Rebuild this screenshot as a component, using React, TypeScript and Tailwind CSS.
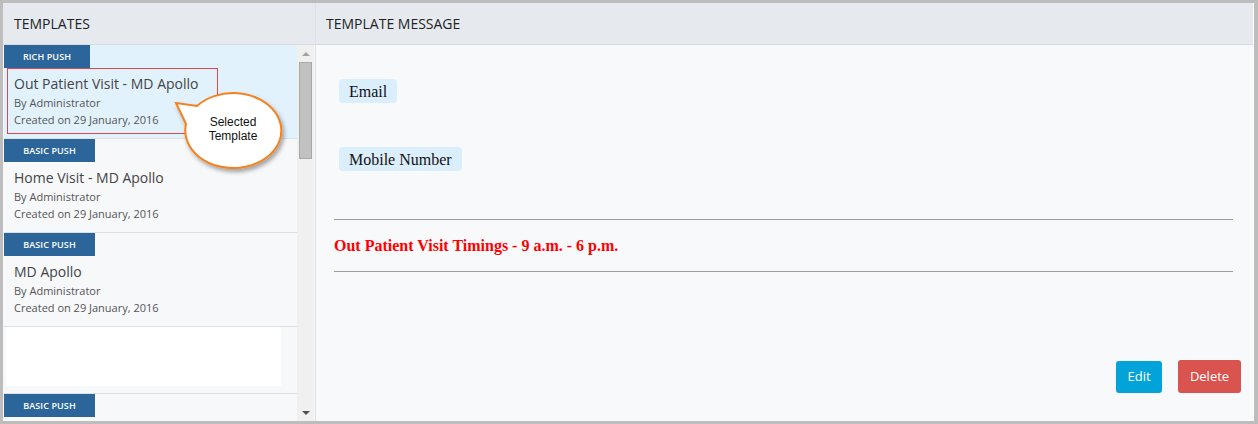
import React from "react";

const sans = { fontFamily: '"Open Sans", "Noto Sans", sans-serif' };

function Badge({ label, wide }: { label: string; wide?: boolean }) {
  return (
    <div
      className={`h-[23px] ${wide ? "w-[91px]" : "w-[86px]"} bg-[#2b6599] text-white text-[9px] font-semibold flex items-center justify-center tracking-[0.1px]`}
    >
      {label}
    </div>
  );
}

function Item({
  badge,
  title,
  selected,
  wide,
}: {
  badge: string;
  title: string;
  selected?: boolean;
  wide?: boolean;
}) {
  return (
    <div
      className={`h-[94px] border-b border-[#dcdfe3] ${selected ? "bg-[#e2f2fd]" : "bg-[#f7f8fa]"}`}
    >
      <Badge label={badge} wide={wide} />
      <div
        className={`ml-[3px] w-[211px] border pl-[6px] pt-[5px] pb-[5px] ${selected ? "border-[#e0474c]" : "border-transparent"}`}
      >
        <div className="text-[14px] leading-[20px] text-[#444] whitespace-nowrap">{title}</div>
        <div className="text-[11px] leading-[17px] text-[#555]">By Administrator</div>
        <div className="text-[11px] leading-[17px] text-[#555]">Created on 29 January, 2016</div>
      </div>
    </div>
  );
}

export default function App() {
  return (
    <div
      className="w-[1258px] h-[424px] bg-[#bdbdbd] pt-[3px] pl-[3px] pr-[4px] pb-[3px] overflow-hidden"
      style={sans}
    >
      <div className="relative flex h-full w-full bg-white border-r border-white">
        {/* Left panel */}
        <div className="w-[313px] h-full flex flex-col border-r border-[#dde1e5] bg-[#f7f8fa]">
          <div className="h-[42px] shrink-0 bg-[#e6eaee] border-b border-[#d7dbe0] flex items-center pl-[11px] text-[14px] text-[#222]">
            TEMPLATES
          </div>
          <div className="flex flex-1 min-h-0">
            <div className="w-[294px] pl-[1px] overflow-hidden">
              <Item badge="RICH PUSH" title="Out Patient Visit - MD Apollo" selected />
              <Item badge="BASIC PUSH" title="Home Visit - MD Apollo" wide />
              <Item badge="BASIC PUSH" title="MD Apollo" wide />
              <div className="h-[67px] border-b border-[#dcdfe3] bg-[#f7f8fa] pl-[2px]">
                <div className="w-[275px] h-[59px] bg-white" />
              </div>
              <Badge label="BASIC PUSH" wide />
            </div>
            {/* scrollbar */}
            <div className="w-[17px] bg-[#f0f0f0] flex flex-col items-center">
              <div className="h-[17px] flex items-center justify-center">
                <div className="w-0 h-0 border-l-[4px] border-r-[4px] border-b-[4px] border-l-transparent border-r-transparent border-b-[#a3a3a3]" />
              </div>
              <div className="w-[13px] h-[97px] bg-[#c1c1c1] border border-[#a9a9a9]" />
              <div className="flex-1" />
              <div className="h-[17px] flex items-center justify-center">
                <div className="w-0 h-0 border-l-[4px] border-r-[4px] border-t-[4px] border-l-transparent border-r-transparent border-t-[#505050]" />
              </div>
            </div>
          </div>
        </div>

        {/* Right panel */}
        <div className="flex-1 h-full flex flex-col bg-[#f8f9fb]">
          <div className="h-[42px] shrink-0 bg-[#e6eaee] border-b border-[#d7dbe0] flex items-center pl-[10px] text-[14px] text-[#222]">
            TEMPLATE MESSAGE
          </div>
          <div className="flex-1 relative pl-[18px] pr-[20px]" style={{ fontFamily: '"Liberation Serif", serif' }}>
            <div className="mt-[34px] ml-[5px] w-fit h-[24px] pt-[1px] leading-[23px] px-[10px] bg-[#dbeefc] rounded-[4px] text-[16px] text-[#111]">
              Email
            </div>
            <div className="mt-[44px] ml-[5px] w-fit h-[24px] pt-[1px] leading-[23px] px-[10px] bg-[#dbeefc] rounded-[4px] text-[16px] text-[#111]">
              Mobile Number
            </div>
            <div className="mt-[48px] border-t border-[#9e9e9e]" />
            <div className="h-[51px] flex items-center text-[16px] font-bold text-[#ff0000]">
              Out Patient Visit Timings - 9 a.m. - 6 p.m.
            </div>
            <div className="border-t border-[#9e9e9e]" />
            <div className="flex justify-end gap-[16px] mt-[88px] -mr-[1px]" style={sans}>
              <button className="w-[46px] h-[32px] bg-[#02a3d8] text-white text-[13px] rounded-[3px] mt-[1px]">
                Edit
              </button>
              <button className="w-[63px] h-[33px] bg-[#d9534f] text-white text-[13px] rounded-[3px] -mr-[7px]">
                Delete
              </button>
            </div>
          </div>
        </div>

        {/* Callout */}
        <div className="absolute left-[167px] top-[85px] w-[120px] h-[90px]">
          <svg width="120" height="90" viewBox="0 0 120 90" className="absolute inset-0">
            <defs>
              <filter id="sh" x="-20%" y="-20%" width="150%" height="150%">
                <feDropShadow dx="2" dy="3" stdDeviation="2" floodColor="#000" floodOpacity="0.35" />
              </filter>
            </defs>
            <path
              d="M 16 36 L 6 15 L 27 18 A 48 37.5 0 1 1 16 36 Z"
              fill="#ffffff"
              stroke="#f58220"
              strokeWidth="2"
              strokeLinejoin="miter"
              filter="url(#sh)"
            />
          </svg>
          <div
            className="absolute left-[15px] top-[27px] w-[96px] text-center text-[12px] leading-[14px] text-[#111]"
            style={{ fontFamily: '"Liberation Sans", Arial, sans-serif' }}
          >
            Selected
            <br />
            Template
          </div>
        </div>
      </div>
    </div>
  );
}
